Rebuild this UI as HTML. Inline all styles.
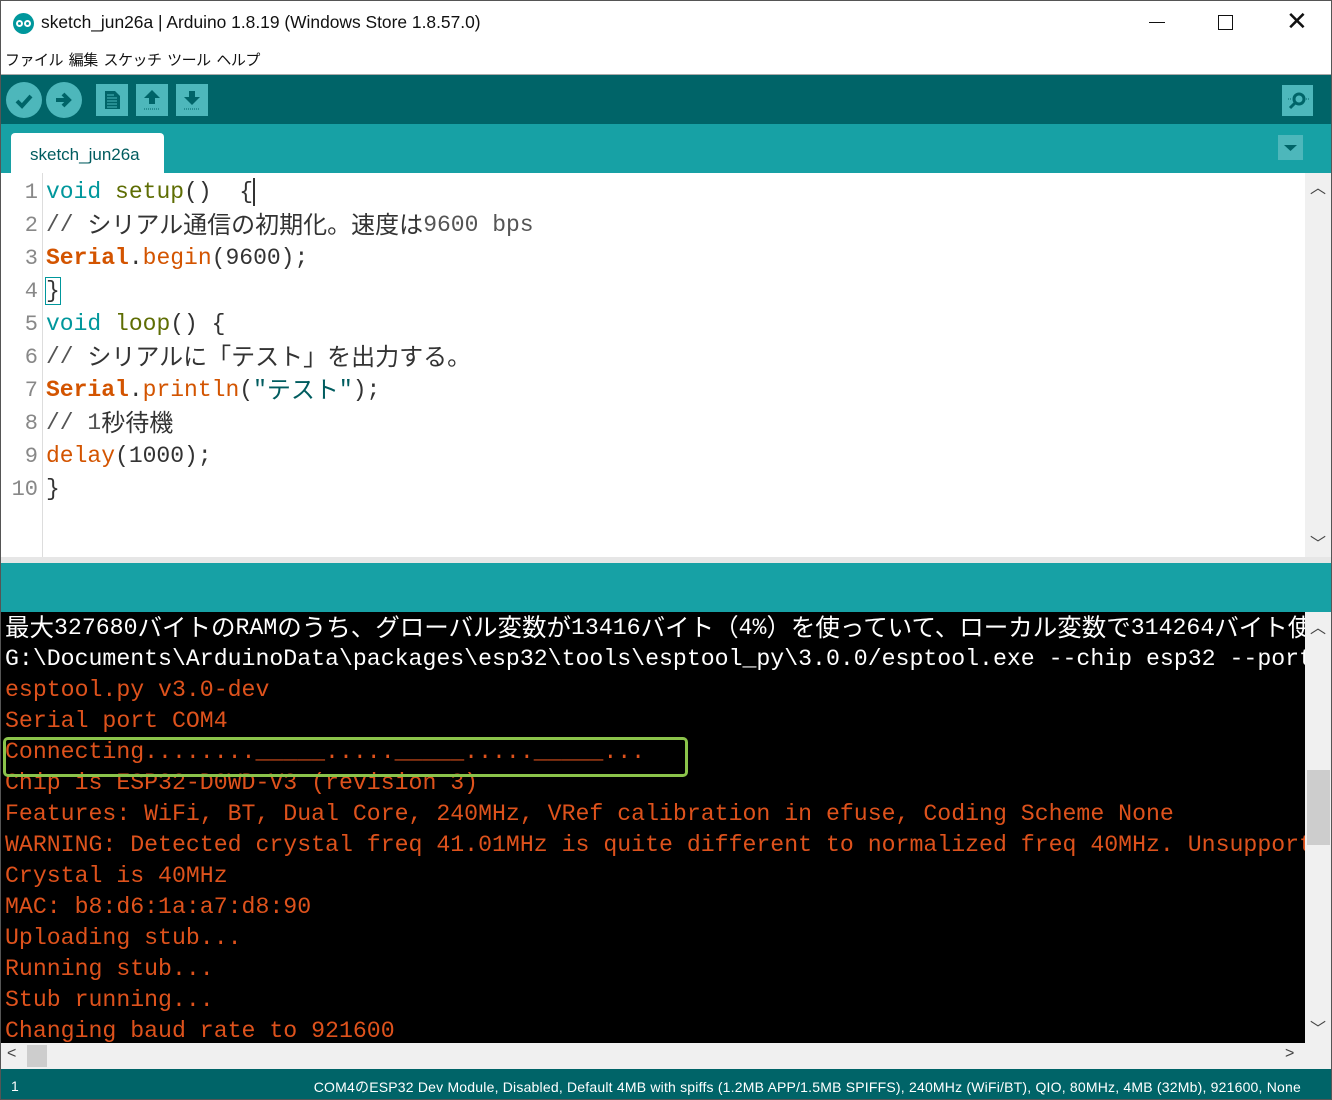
<!DOCTYPE html>
<html><head><meta charset="utf-8">
<style>
*{margin:0;padding:0;box-sizing:border-box}
body{width:1332px;height:1100px;overflow:hidden;background:#fff;position:relative;font-family:"Liberation Sans","Noto Sans CJK JP",sans-serif}
.a{position:absolute}
.mono{font-family:"Liberation Mono","Noto Sans CJK JP",monospace;white-space:pre}
.code div{position:absolute;left:46px;height:33px;line-height:33px;font-size:23px;color:#333}
.ln div{position:absolute;right:0;height:33px;line-height:33px;font-size:22px;color:#888;font-family:"Liberation Mono",monospace}
.kw{color:#00979C}.fn{color:#5E6D03}.or{color:#D35400}.b{font-weight:bold}.st{color:#005C5F}
.j{font-family:"Noto Sans CJK JP",sans-serif;font-size:24px;line-height:1;position:relative;top:2px}
.jc{font-family:"Noto Sans CJK JP",sans-serif;font-size:24.5px;line-height:1;position:relative;top:2px}
.con div{position:absolute;left:5px;height:31px;line-height:31px;font-size:23.2px;color:#DE521C;font-family:"Liberation Mono","Noto Sans CJK JP",monospace;white-space:pre}
.btn{position:absolute;top:84px;width:32px;height:32px;background:#4DB7BB}
.circ{border-radius:50%;width:36px;height:36px;top:82px}
</style></head><body>
<div class="a" style="left:0;top:0;width:1332px;height:1100px;border:1px solid #555;pointer-events:none;z-index:9"></div>
<div class="a" style="left:13px;top:13px;width:21px;height:21px;border-radius:50%;background:#00979C"></div>
<div class="a" style="left:16px;top:20px;width:7px;height:7px;border:2px solid #fff;border-radius:50%"></div>
<div class="a" style="left:24px;top:20px;width:7px;height:7px;border:2px solid #fff;border-radius:50%"></div>
<div class="a" style="left:41px;top:12px;font-size:17.4px;color:#111">sketch_jun26a | Arduino 1.8.19 (Windows Store 1.8.57.0)</div>
<div class="a" style="left:1149px;top:22px;width:16px;height:1px;background:#111"></div>
<div class="a" style="left:1218px;top:15px;width:15px;height:15px;border:1px solid #111"></div>
<div class="a" style="left:1286px;top:6px;font-size:26px;color:#111;font-weight:100">✕</div>
<div class="a" style="left:5px;top:49px;font-size:15px;color:#111;font-family:'Noto Sans CJK JP',sans-serif;letter-spacing:-0.5px">ファイル&nbsp;&nbsp;編集&nbsp;&nbsp;スケッチ&nbsp;&nbsp;ツール&nbsp;&nbsp;ヘルプ</div>
<div class="a" style="left:0;top:74px;width:1332px;height:1px;background:#aaa"></div>
<div class="a" style="left:0;top:75px;width:1332px;height:49px;background:#006468"></div>
<div class="btn circ" style="left:6px"></div>
<svg class="a" style="left:6px;top:82px" width="36" height="36"><path d="M11 19 l5 5 l9 -10" stroke="#006468" stroke-width="4" fill="none"/></svg>
<div class="btn circ" style="left:46px"></div>
<svg class="a" style="left:46px;top:82px" width="36" height="36"><path d="M10 18 h12 M17 12 l6 6 l-6 6" stroke="#006468" stroke-width="4" fill="none"/></svg>
<div class="btn" style="left:96px"></div>
<svg class="a" style="left:96px;top:84px" width="32" height="32"><path d="M9 7 h10 l5 5 v13 h-15z" fill="#006468"/><path d="M11 11 h7 M11 14 h10 M11 17 h10 M11 20 h10 M11 23 h10" stroke="#4DB7BB" stroke-width="1"/></svg>
<div class="btn" style="left:136px"></div>
<svg class="a" style="left:136px;top:84px" width="32" height="32"><path d="M16 6 l8 8 h-5 v6 h-6 v-6 h-5z" fill="#006468"/><path d="M8 25 h16" stroke="#006468" stroke-dasharray="1 1"/></svg>
<div class="btn" style="left:176px"></div>
<svg class="a" style="left:176px;top:84px" width="32" height="32"><path d="M16 21 l8 -8 h-5 v-6 h-6 v6 h-5z" fill="#006468"/><path d="M8 25 h16" stroke="#006468" stroke-dasharray="1 1"/></svg>
<div class="btn" style="left:1282px;top:85px;width:31px;height:31px"></div>
<svg class="a" style="left:1282px;top:85px" width="31" height="31"><circle cx="17" cy="14" r="5" stroke="#006468" stroke-width="3" fill="none"/><path d="M13 18 l-5 5" stroke="#006468" stroke-width="3"/><path d="M24 14h4M6 14h4" stroke="#006468" stroke-dasharray="1 1"/></svg>
<div class="a" style="left:0;top:124px;width:1332px;height:49px;background:#17A1A5"></div>
<div class="a" style="left:11px;top:133px;width:153px;height:40px;background:#fff;border-radius:4px 4px 0 0"></div>
<div class="a" style="left:30px;top:145px;font-size:17px;color:#005C5F">sketch_jun26a</div>
<div class="a" style="left:1278px;top:135px;width:25px;height:25px;background:#4DB7BB"></div>
<svg class="a" style="left:1278px;top:135px" width="25" height="25"><path d="M6 10 h13 l-6.5 6z" fill="#006468"/></svg>
<div class="a" style="left:42px;top:173px;width:1px;height:384px;background:#ddd"></div>
<div class="a" style="left:1305px;top:173px;width:27px;height:384px;background:#f0f0f0"></div>
<div class="a" style="left:1310px;top:174px;font-size:16px;color:#444">︿</div>
<div class="a" style="left:1310px;top:530px;font-size:16px;color:#444">﹀</div>
<div class="a ln" style="left:0;top:176px;width:38px">
<div style="top:0">1</div><div style="top:33px">2</div><div style="top:66px">3</div><div style="top:99px">4</div><div style="top:132px">5</div><div style="top:165px">6</div><div style="top:198px">7</div><div style="top:231px">8</div><div style="top:264px">9</div><div style="top:297px">10</div></div>
<div class="a code mono" style="left:0;top:176px;width:1300px">
<div style="top:0"><span class="kw">void</span> <span class="fn">setup</span>()  {<span style="display:inline-block;width:2px;height:28px;background:#333;vertical-align:middle"></span></div>
<div style="top:33px;color:#555">// <span class="j" style="color:#333">シリアル通信の初期化。速度は</span>9600 bps</div>
<div style="top:66px"><span class="or b">Serial</span>.<span class="or">begin</span>(9600);</div>
<div style="top:99px"><span style="outline:1px solid #00979C">}</span></div>
<div style="top:132px"><span class="kw">void</span> <span class="fn">loop</span>() {</div>
<div style="top:165px;color:#555">// <span class="j" style="color:#333">シリアルに「テスト」を出力する。</span></div>
<div style="top:198px"><span class="or b">Serial</span>.<span class="or">println</span>(<span class="st">"<span class="j">テスト</span>"</span>);</div>
<div style="top:231px;color:#555">// 1<span class="j" style="color:#333">秒待機</span></div>
<div style="top:264px"><span class="or">delay</span>(1000);</div>
<div style="top:297px">}</div>
</div>
<div class="a" style="left:0;top:557px;width:1332px;height:6px;background:#e6e6e6"></div>
<div class="a" style="left:0;top:563px;width:1332px;height:49px;background:#17A1A5"></div>
<div class="a" style="left:0;top:612px;width:1305px;height:431px;background:#000;overflow:hidden">
<div class="con" style="position:absolute;left:0;top:1px;width:1400px">
<div style="top:0;color:#fff"><span class="jc">最大</span>327680<span class="jc">バイトの</span>RAM<span class="jc">のうち、グローバル変数が</span>13416<span class="jc">バイト（</span>4%<span class="jc">）を使っていて、ローカル変数で</span>314264<span class="jc">バイト使える</span></div>
<div style="top:31px;color:#fff">G:\Documents\ArduinoData\packages\esp32\tools\esptool_py\3.0.0/esptool.exe --chip esp32 --port</div>
<div style="top:62px">esptool.py v3.0-dev</div>
<div style="top:93px">Serial port COM4</div>
<div style="top:124px">Connecting........_____....._____....._____...</div>
<div style="top:155px">Chip is ESP32-D0WD-V3 (revision 3)</div>
<div style="top:186px">Features: WiFi, BT, Dual Core, 240MHz, VRef calibration in efuse, Coding Scheme None</div>
<div style="top:217px">WARNING: Detected crystal freq 41.01MHz is quite different to normalized freq 40MHz. Unsupported</div>
<div style="top:248px">Crystal is 40MHz</div>
<div style="top:279px">MAC: b8:d6:1a:a7:d8:90</div>
<div style="top:310px">Uploading stub...</div>
<div style="top:341px">Running stub...</div>
<div style="top:372px">Stub running...</div>
<div style="top:403px">Changing baud rate to 921600</div>
</div></div>
<div class="a" style="left:3px;top:737px;width:685px;height:40px;border:3px solid #8BC34A;border-radius:5px"></div>
<div class="a" style="left:1305px;top:612px;width:27px;height:431px;background:#f0f0f0"></div>
<div class="a" style="left:1307px;top:770px;width:23px;height:75px;background:#cdcdcd"></div>
<div class="a" style="left:1310px;top:614px;font-size:16px;color:#444">︿</div>
<div class="a" style="left:1310px;top:1015px;font-size:16px;color:#444">﹀</div>
<div class="a" style="left:0;top:1043px;width:1332px;height:26px;background:#f0f0f0"></div>
<div class="a" style="left:27px;top:1045px;width:20px;height:22px;background:#cdcdcd"></div>
<div class="a" style="left:7px;top:1045px;font-size:16px;color:#444">&lt;</div>
<div class="a" style="left:1285px;top:1045px;font-size:16px;color:#444">&gt;</div>
<div class="a" style="left:0;top:1069px;width:1332px;height:31px;background:#006468"></div>
<div class="a" style="left:11px;top:1078px;font-size:14px;color:#fff">1</div>
<div class="a" style="right:31px;top:1077px;font-size:14px;color:#fff;letter-spacing:0.2px;white-space:nowrap">COM4<span style="font-family:'Noto Sans CJK JP'">の</span>ESP32 Dev Module, Disabled, Default 4MB with spiffs (1.2MB APP/1.5MB SPIFFS), 240MHz (WiFi/BT), QIO, 80MHz, 4MB (32Mb), 921600, None</div>
</body></html>
